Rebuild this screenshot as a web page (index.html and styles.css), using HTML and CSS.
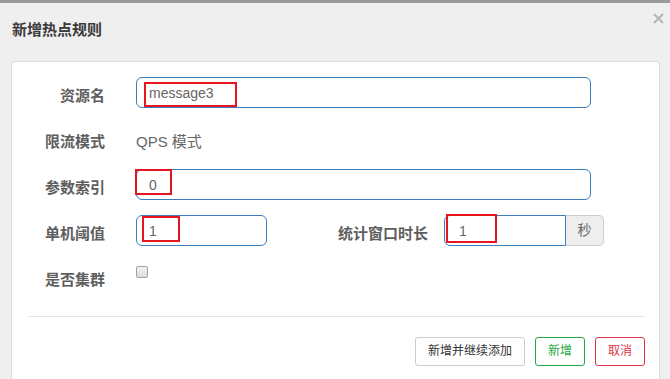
FILE: index.html
```html
<html>
  <head>
    <title>新增热点规则</title>
    <link rel="stylesheet" href="styles.css">
  </head>
  <body>
    <div class="topbar"></div>

    <div class="modal">
      <div class="modal-header">
        <h4 class="modal-title">新增热点规则</h4>
        <span class="close">
          <svg width="11" height="11" viewBox="0 0 11 11">
            <path d="M1 1 L10 10 M10 1 L1 10" stroke="#b4b4b4" stroke-width="2" fill="none"/>
          </svg>
        </span>
      </div>

      <div class="panel">
        <form class="rule-form" autocomplete="off">
          <div class="form-row">
            <label class="control-label">资源名</label>
            <div class="field">
              <input type="text" class="line-input" value="message3">
              <span class="mark mark-resource"></span>
            </div>
          </div>

          <div class="form-row">
            <label class="control-label">限流模式</label>
            <div class="static-text">QPS 模式</div>
          </div>

          <div class="form-row">
            <label class="control-label">参数索引</label>
            <div class="field">
              <input type="text" class="line-input" value="0">
              <span class="mark mark-index"></span>
            </div>
          </div>

          <div class="form-row">
            <label class="control-label">单机阈值</label>
            <div class="split">
              <div class="field field-short">
                <input type="text" class="line-input" value="1">
                <span class="mark mark-count"></span>
              </div>
              <label class="control-label label-window">统计窗口时长</label>
              <div class="input-group">
                <div class="field">
                  <input type="text" class="line-input group-input" value="1">
                  <span class="mark mark-window"></span>
                </div>
                <span class="addon">秒</span>
              </div>
            </div>
          </div>

          <div class="form-row">
            <label class="control-label">是否集群</label>
            <div class="check-wrap">
              <input type="checkbox" class="check">
            </div>
          </div>
        </form>

        <hr class="divider">

        <div class="footer">
          <button type="button" class="btn btn-default">新增并继续添加</button>
          <button type="button" class="btn btn-success">新增</button>
          <button type="button" class="btn btn-danger">取消</button>
        </div>
      </div>
    </div>
  </body>
</html>
```

FILE: styles.css
```css
html, body {
  margin: 0;
  background-color: #efefef;
  font-family: "Liberation Sans", "Noto Sans CJK SC", sans-serif;
  color: #555;
}
.topbar {
  height: 3px;
  background-color: #9a9a9a;
}
.modal-header {
  display: flex;
  justify-content: space-between;
  align-items: flex-start;
  padding: 0 6px 0 12px;
  height: 58px;
}
.modal-title {
  margin: 17px 0 0 0;
  font-size: 15px;
  line-height: 20px;
  font-weight: bold;
  color: #3a3a3a;
}
.close {
  display: block;
  margin-top: 10px;
  height: 11px;
}
.close svg {
  display: block;
}
.panel {
  margin: 0 10px 0 11px;
  background-color: #fff;
  border: 1px solid #dcdcdc;
  border-bottom: none;
  border-radius: 4px 4px 0 0;
  padding-top: 15px;
  height: 320px;
}
.rule-form {
  display: flex;
  flex-direction: column;
  gap: 15px;
  padding-right: 68px;
}
.form-row {
  display: grid;
  grid-template-columns: 93px 1fr;
  column-gap: 31px;
  height: 31px;
}
.control-label {
  text-align: right;
  font-size: 15px;
  font-weight: bold;
  line-height: 20px;
  padding-top: 9px;
  color: #5e5e5e;
  white-space: nowrap;
}
.static-text {
  font-size: 15px;
  line-height: 20px;
  padding-top: 9px;
  color: #666;
}
.field {
  position: relative;
  height: 31px;
}
.line-input {
  box-sizing: border-box;
  width: 100%;
  height: 31px;
  margin: 0;
  padding: 0 12px;
  border: 1px solid #3a7dbd;
  border-radius: 6px;
  font-family: "Liberation Sans", "Noto Sans CJK SC", sans-serif;
  font-size: 14px;
  color: #666;
  background-color: #fff;
  outline: none;
}
.mark {
  position: absolute;
  box-sizing: border-box;
  border: 2px solid #e5161f;
}
.mark-resource {
  left: 8px;
  top: 5px;
  width: 93px;
  height: 25px;
}
.mark-index {
  left: -1px;
  top: 0;
  width: 37px;
  height: 26px;
}
.mark-count {
  left: 6px;
  top: 1px;
  width: 38px;
  height: 26px;
}
.mark-window {
  left: 2px;
  top: -1px;
  width: 51px;
  height: 29px;
}
.split {
  display: flex;
  align-items: flex-start;
}
.field-short {
  width: 131px;
  flex: none;
}
.label-window {
  width: 91px;
  text-align: left;
  margin-left: 71px;
  flex: none;
}
.input-group {
  display: flex;
  margin-left: 15px;
  flex: none;
}
.input-group .field {
  width: 122px;
}
.group-input {
  border-radius: 6px 0 0 6px;
  padding-left: 14px;
}
.addon {
  box-sizing: border-box;
  width: 38px;
  height: 31px;
  line-height: 29px;
  text-align: center;
  font-size: 14px;
  color: #666;
  background-color: #eee;
  border: 1px solid #ccc;
  border-left: none;
  border-radius: 0 5px 5px 0;
}
.check-wrap {
  padding-top: 5px;
}
.check {
  appearance: none;
  -webkit-appearance: none;
  display: block;
  box-sizing: border-box;
  width: 12px;
  height: 12px;
  margin: 0;
  border: 1px solid #a2a2a2;
  border-radius: 2px;
  background: linear-gradient(#f4f4f4, #dadada);
}
.divider {
  margin: 24px 14px 0 16px;
  border: none;
  border-top: 1px solid #e5e5e5;
  height: 0;
}
.footer {
  display: flex;
  justify-content: flex-end;
  gap: 10px;
  margin: 20px 14px 0 0;
}
.btn {
  box-sizing: border-box;
  height: 29px;
  padding: 0 12px;
  font-family: "Liberation Sans", "Noto Sans CJK SC", sans-serif;
  font-size: 12px;
  line-height: 27px;
  background-color: #fff;
  border: 1px solid #ccc;
  border-radius: 3px;
  cursor: pointer;
}
.btn-default {
  color: #333;
}
.btn-success {
  color: #28a745;
  border-color: #28a745;
}
.btn-danger {
  color: #dc3545;
  border-color: #dc3545;
}
```
